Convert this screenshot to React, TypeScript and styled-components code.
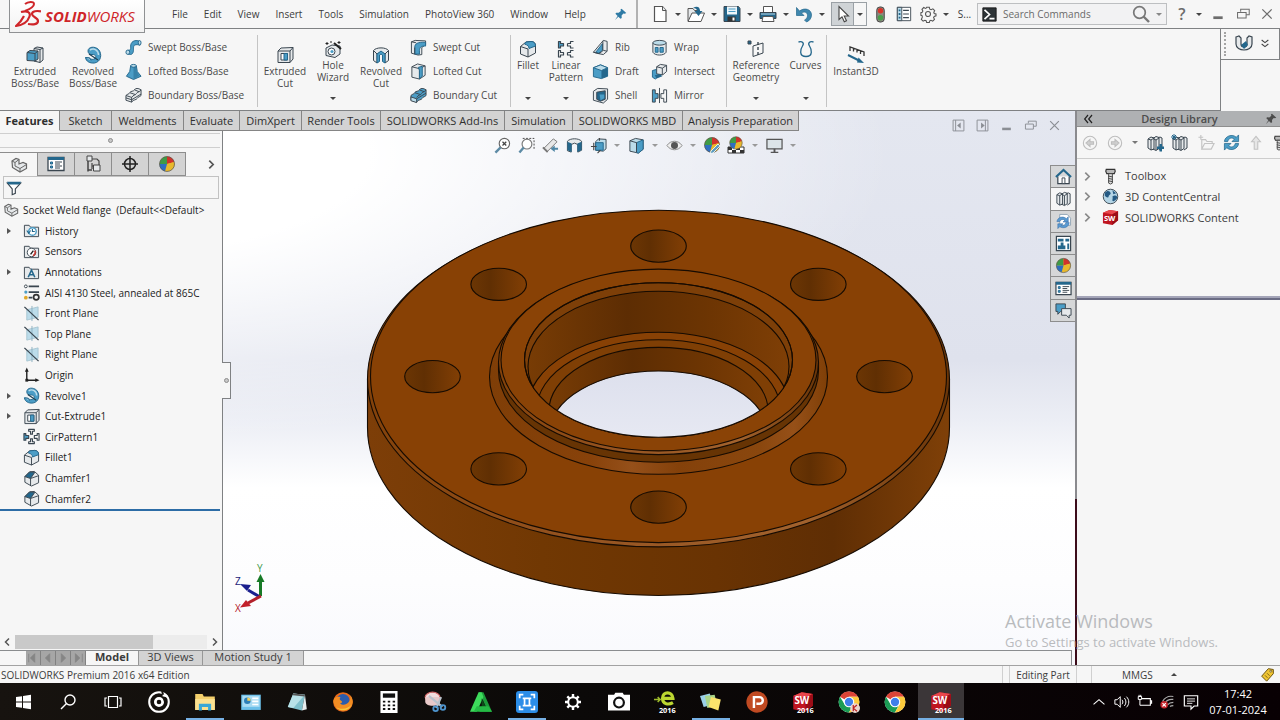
import React, { ReactNode } from 'react';
import styled, { createGlobalStyle, css } from 'styled-components';

const ink = '#3a4650';
const blue = '#4b9dc6';
const deep = '#24678c';
const pale = '#bcdcea';
const steel = '#e6e9eb';
const line = '#7f8183';
const chrome = '#f6f6f6';

const GlobalStyle = createGlobalStyle`
  * { box-sizing: border-box; }
  body {
    margin: 0;
    background: ${chrome};
    color: #3c3c3c;
    font-family: "Open Sans", "Noto Sans", sans-serif;
    font-size: 10px;
    line-height: 12px;
  }
  button, input { font: inherit; color: inherit; }
  button { padding: 0; border: 0; background: none; white-space: nowrap; }
  ul { list-style: none; margin: 0; padding: 0; }
`;

/* ---------- icons, all on an 18 x 18 grid ---------- */

const o = { fill: 'none', stroke: ink, strokeWidth: 1, strokeLinejoin: 'round' as const };

const sphere = (
  <>
    <circle cx="9" cy="9" r="7.5" fill="#e9b92c" />
    <path d="M9 9V1.500A7.500 7.500 0 0 0 1.500 9z" fill="#3f9b46" />
    <path d="M9 9V1.500A7.500 7.500 0 0 1 16.200 7z" fill="#d1332b" />
    <path d="M9 9l7.300-2A7.500 7.500 0 0 1 13 15.300z" fill="#e9b92c" />
    <path d="M9 9l-7.500 0A7.500 7.500 0 0 0 7 16.200z" fill="#2e6fc0" />
    <circle cx="9" cy="9" r="7.5" fill="none" stroke="#555" strokeWidth=".7" />
  </>
);

const books = (
  <>
    <path d="M2 5l3-2 3 1v11l-3 1-3-2zM7 4.500l3-2 3 1v11l-3 2-3-1.500M12 4l2-1 2 1v10l-3 2" fill={steel} stroke={ink} />
    <path d="M5 6v10M10 6v10M2 5l3 1 3-2M7 4.500l3 1.500 3-2" {...o} />
  </>
);

const folder = <path d="M1.500 15.500v-12h5l1.500 2h8.500v10z" fill={steel} stroke={ink} />;

const chromeDisc = (
  <>
    <circle cx="9" cy="9" r="8.500" fill="#fff" />
    <path d="M9 9L1.600 4.800A8.500 8.500 0 0 1 16.400 4.800L9 4.800z" fill="#dc4437" />
    <path d="M1.600 4.800A8.500 8.500 0 0 0 9 17.500L12.500 11 9 13 5.500 11z" fill="#1b9c55" />
    <path d="M16.400 4.800A8.500 8.500 0 0 1 9 17.500L12.700 11 13 8 9 4.800z" fill="#fdcb3c" />
    <circle cx="9" cy="9" r="4.300" fill="#fff" />
    <circle cx="9" cy="9" r="3.400" fill="#3f7fea" />
  </>
);

const swCube = (
  <>
    <path d="M1 4l7-3 9 1.500V12l-6 5-10-2z" fill="#c01520" />
    <path d="M1 4l7-3 9 1.500-6 3z" fill="#e8474c" />
    <path d="M11 5.500L17 2.500V12l-6 5z" fill="#9b0d17" />
  </>
);

const fold = (x: ReactNode) => <>{folder}{x}</>;

const icons: Record<string, ReactNode> = {
  extrude: <><path d="M8 2.500l3-1.500 6 1v12l-3 2.500-6-1.500z" fill={steel} stroke={ink} /><path d="M14 3.500v13M8 2.500l6 1 3-1.500" {...o} /><path d="M1 6.500l3-2 8 .5v8l-3 2-8-.5z" fill={blue} stroke={ink} /><path d="M9 7.500V15M1 6.500l8 1 3-2.500" {...o} /></>,
  revolve: <><path d="M4 5C4 .500 11 0 14.500 3.500 18.500 8 17 16 10.500 17 6 17.500 2 15.500 1.500 11.500l4 .5c1 1.500 4 2 5.500.5 2-2 0-4-2-4C6 9 4 7.500 4 5z" fill={blue} stroke={deep} /><path d="M6 4c4-2.500 8.500.5 8.500 5" stroke={pale} fill="none" strokeWidth="1.500" /><path d="M5 8l9 6" stroke="#1d3e50" strokeWidth="1.200" /><path d="M1.500 11.500l4 .5 1.500 2.500" fill={pale} stroke={deep} /></>,
  sweep: <><path d="M3 16c5 1.500 6-1.500 6-5s0-5 4-5l3 .5V2.500C9.500 0 6 3.500 6 7.500c0 3 .5 4.500-3 4.500z" fill={blue} stroke={deep} /><ellipse cx="3" cy="14" rx="2" ry="2.300" fill={pale} stroke={deep} /><ellipse cx="15.500" cy="4" rx="1.500" ry="2.300" fill={pale} stroke={deep} /></>,
  loft: <><path d="M6 3h6l1 6 4 5-8 3.500L1.500 14 5 9z" fill={blue} stroke={deep} /><path d="M9 4v13l6-3.500-3-5-.5-5z" fill={deep} opacity=".5" /><ellipse cx="9" cy="3" rx="3" ry="1.500" fill={pale} stroke={deep} /></>,
  boundary: <><path d="M1 9c2-2 3-1 4-3s4-1 5-3 4-2 7 0v6c-2 2-3 1-4 3s-4 1-6 4l-6-2z" fill={steel} stroke={ink} /><path d="M1 9l6 2v5M7 11c2-3 4-2 5-4s3-1 5-4M1 11.500l6 2 10-6M5 6l6 2M10 3l5 2" {...o} /></>,
  boundaryCut: <><path d="M1 9c2-2 3-1 4-3s4-1 5-3 4-2 7 0v6c-2 2-3 1-4 3s-4 1-6 4l-6-2z" fill={blue} stroke={ink} /><path d="M1 10.500l6 2v4l-6-2zM7 12.500l10-6" {...o} fill={pale} /><path d="M5 6l6 2M10 3l5 2M7 11c2-3 4-2 5-4s3-1 5-4" {...o} /></>,
  cutExtrude: <><path d="M2 5l3-3 12-.5V13l-3 3.500H2z" fill={steel} stroke={ink} /><path d="M2 5h12v11.500M14 5l3-3.500" {...o} /><path d="M5 7.500h6.500v6.500H5z" fill="#fff" stroke={ink} /><path d="M8 7.500h3.500V14H8z" fill={blue} stroke={deep} /></>,
  hole: <><path d="M2 8l6-3 8 1v8l-5 3.500-9-2z" fill={steel} stroke={ink} /><circle cx="7.500" cy="11.500" r="3.500" fill="#fff" stroke={ink} /><circle cx="8" cy="11.500" r="1.600" fill={blue} /><path d="M10 3l7 6" stroke="#222" strokeWidth="2" /><path d="M3 2v3M1.500 3.500h3M7 1v2M15 1v3M13.500 2.500h3" stroke="#222" /></>,
  cutRevolve: <><path d="M1.500 4.500C4 1 14 1 16.500 4.500v10L13 17V8L9 6 5 8v9l-3.500-2.500z" fill={steel} stroke={ink} /><path d="M5 8l4-3 4 3v9l-2.500-1.500V9L9 8 7.500 9v6.500L5 17z" fill={blue} stroke={deep} /><path d="M1.500 4.500L5 8M16.500 4.500L13 8" {...o} /></>,
  sweepCut: <><path d="M1.500 3l4-1.500 11 .5v4l-4 3v7.500l-4 .5-7-2z" fill={steel} stroke={ink} /><path d="M5 16V9c0-4 3-6 11.500-5.500v4C12 7 10 9 10 12v4z" fill={blue} stroke={deep} /><path d="M1.500 3l5 1M5 9v7" {...o} /></>,
  loftCut: <><path d="M2 4l6-3 8 2v10l-6 4-8-2z" fill={steel} stroke={ink} /><path d="M2 4l8 2 6-3M10 6v11" {...o} /><path d="M9 4.500l4-1V14l-3 2.500V8z" fill={blue} stroke={deep} /></>,
  fillet: <><path d="M1.500 6.500L7 2l5-.5c3 0 4.500 1.500 4.500 4.500v7L9 17l-7.500-3z" fill={steel} stroke={ink} /><path d="M7 2l5-.5c3 0 4.500 1.500 4.500 4.500L10 8.500C10 6 8.500 5 5.500 4z" fill={blue} stroke={deep} /><path d="M1.500 6.500L9 9v8" {...o} /></>,
  chamfer: <><path d="M2 7l5-5 5-.5 4.500 4v8L9 17l-7-4z" fill={steel} stroke={ink} /><path d="M2 7l5-5 5.500.5L8 9z" fill={deep} stroke={ink} /><path d="M8 9v8M8 9l8.500-3" {...o} /></>,
  linear: <g {...o} strokeWidth="1.200"><path d="M1.500 1.500h2v2h3v2.500h-3v2h-2z" fill={blue} /><path d="M10.500 3.500h3v-2h3M16.500 8h-3V6h-3V3.500M1.500 10.500h2v2h3V15h-3v2h-2zM10.500 12.500h3v-2h3M16.500 17h-3v-2h-3v-2.500" /></g>,
  circular: <g {...o} strokeWidth="1.200"><path d="M1 6h2v2h3v3H3v2H1z" fill={blue} /><path d="M6 1.500h6v2h-2v3H8v-3H6zM17 6h-2v2h-3v3h3v2h2zM6 16.500h6v-2h-2v-3H8v3H6z" /></g>,
  rib: <><path d="M1.500 14L12 1.500l4 1V13l-4 3.500-5-1z" fill={steel} stroke={ink} /><path d="M4 14L11 5v7l-4 3z" fill={blue} stroke={deep} /><path d="M1.500 14l6 1.500 4-3V2M12 12l4 1" {...o} /></>,
  draft: <><path d="M1.500 5L9 2l7.500 3v9L10 16.500l-8.500-2z" fill={blue} stroke={deep} /><path d="M10 8l6.500-3v9L10 16.500z" fill={deep} /><path d="M1.500 5L10 8l6.500-3L9 2z" fill={pale} stroke={deep} /></>,
  shell: <><path d="M1.500 4.500L6 1.500l10.500.5v11L12 17l-10.500-3z" fill={steel} stroke={ink} /><path d="M5 5.500l9-1.500v9l-5 2-4-2z" fill={deep} stroke={ink} /><path d="M8 8h5v4l-4 2z" fill={blue} /></>,
  wrap: <><path d="M2 4v10c2 4 12 4 14 0V4" fill={steel} stroke={ink} /><ellipse cx="9" cy="4" rx="7" ry="2.500" fill={pale} stroke={ink} /><path d="M4.500 9h3v5h-3zM9.500 9H13v5H9.500z" fill={blue} stroke={deep} /></>,
  intersect: <><path d="M1.500 8l7-2v8l-4 3-3-2z" fill={blue} stroke={deep} /><path d="M6 4l4-2.500 6.500 1V9l-4 3.500-6.500-1z" fill={steel} stroke={ink} /><path d="M6 4l6 1.500 4.500-3M12 5.500v7" {...o} /><path d="M4 13l6-1 2 2-6 2.500z" fill={deep} /></>,
  mirror: <><path d="M1.500 3h3v4h3v5h-3v4h-3z" fill={blue} stroke={ink} /><path d="M9 1v16" stroke={ink} /><path d="M16.500 3h-3v4h-3v5h3v4h3z" {...o} /></>,
  refGeo: <><path d="M1 1h3v3H1z" fill={deep} stroke={ink} /><path d="M6 6l10-3v10L6 16.500z" {...o} /><path d="M11 2v3M11 7v3M11 12v3" stroke={ink} strokeWidth="1.400" /></>,
  curves: <path d="M1.500 2c4-1 6 1 4 4s-4 10.500 3.500 10.500S14.500 9 12.500 6s0-5 4-4" fill="none" stroke={deep} strokeWidth="1.300" />,
  instant: <><path d="M3 5V1l14 5v4M6.500 2.500v3M10 3.500v3M13.500 5v3" fill="none" stroke="#333" strokeWidth="1.300" /><path d="M1 9l12 6" stroke={deep} strokeWidth="2" /><path d="M11.500 11.500L17 17l-7-.500z" fill={deep} /></>,
  part: <><path d="M2 5l4-2.500 3 1V8l4-1.500 3.500 1.500v4.500L10 16l-7.500-4.500z" fill={steel} stroke="#666" strokeWidth="1.200" /><path d="M2 5l3 1.500 4-3M5 6.500V10l5 2.500 6.500-4M10 12.500V16" {...o} stroke="#666" /></>,
  props: <><path d="M1 2.500h16v13H1z" fill="#fff" stroke={ink} strokeWidth="1.300" /><path d="M1 2h16v3H1z" fill={deep} /><path d="M3.500 7h2v2h-2zM3.500 11h2v2h-2z" fill={blue} stroke={deep} /><path d="M8 7h7M8 9h5M8 11h7M8 13h5" stroke={ink} /></>,
  config: <><path d="M4 1.500v15M4 3h3M4 15h4" stroke="#444" fill="none" strokeWidth="1.500" /><path d="M3 1h5v5H3zM9.500 10h6.500v6H9.500z" fill={steel} stroke="#444" /><path d="M8 4h5l2 2v4M8 8v6M8 11h2" stroke="#444" fill="none" strokeWidth="1.200" /></>,
  target: <g fill="none" stroke="#222" strokeWidth="1.500"><circle cx="9" cy="9" r="5.500" /><path d="M9 1v16M1 9h16" /></g>,
  sphere,
  filter: <><path d="M1.500 3.500L7 10v6.500l3.500-1.500V10l6-6.500z" fill="#fff" stroke={ink} strokeWidth="1.300" /><path d="M1 2h16l-2 3H3z" fill={deep} /></>,
  history: fold(<><circle cx="10" cy="10" r="4" fill="#fff" stroke={blue} strokeWidth="1.500" /><path d="M10 7.500V10h2.500M4 9l2 3 2-3" fill="none" stroke={deep} strokeWidth="1.200" /></>),
  sensors: fold(<><circle cx="9" cy="10" r="4.500" fill="#fff" stroke={ink} /><path d="M12.500 8a4 4 0 0 1-2 5.500" fill="none" stroke="#c23a34" strokeWidth="1.800" /><path d="M8 12l3-4" stroke="#222" strokeWidth="1.500" /></>),
  annot: fold(<path d="M5.500 14L9 6.500 12.500 14M6.800 11.500h4.500" fill="none" stroke={deep} strokeWidth="1.600" />),
  material: <><path d="M6 2.500h11M6 8.500h11M6 14.500h4" stroke={ink} strokeWidth="1.800" /><circle cx="3" cy="2.500" r="1.500" fill="#fff" stroke={ink} /><circle cx="3" cy="8.500" r="1.700" fill={blue} /><circle cx="3" cy="14.500" r="2" fill="#e0a92c" /><circle cx="14" cy="14" r="2.800" fill="none" stroke="#333" strokeWidth="1.800" /></>,
  plane: <><path d="M4 5l12-3v11L4 16z" fill={pale} stroke="#9dbecb" strokeWidth=".8" /><path d="M9.500 1v16" stroke="#8db0c0" /><path d="M1.500 2l15 14" stroke="#3a4650" strokeWidth="1.400" /></>,
  origin: <><path d="M4 3v11h11" fill="none" stroke="#222" strokeWidth="1.500" /><path d="M4 .500L6 5H2zM17.500 14L13 12v4z" fill="#222" /><path d="M2.500 12.500h3v3h-3z" fill="#222" /></>,
  page: <><path d="M3.500 1.500h8l3.500 4v11H3.500z" fill="#fff" stroke="#555" strokeWidth="1.200" /><path d="M11.500 1.500v4H15" fill={steel} stroke="#555" /></>,
  open: <><path d="M1 16V3.500h5l1.500 2h5V8" fill={steel} stroke="#555" /><path d="M1 16.500L5 8h12.500L14 16.500z" fill="#fff" stroke="#555" /><path d="M6 3c4-2.500 7-1 7 3h2.500L11.500 11 7.500 6H10c0-2-1.500-3-4-3z" fill={deep} /></>,
  save: <><path d="M1 1.500h14.500l1.500 2v13H1z" fill={deep} stroke={ink} /><path d="M4 1.500h10v8H4z" fill="#eef6fa" /><path d="M5.500 4h7M5.500 6.500h7" stroke={blue} /><path d="M4.500 11.500h8v5h-8z" fill="#333" /><path d="M9.500 12.500h2v3h-2z" fill="#fff" /></>,
  print: <><path d="M4.500 1.500h9V8h-9z" fill="#fff" stroke="#555" /><path d="M1 7.500h16v6H1z" fill={deep} stroke={ink} /><path d="M2 9h14" stroke={pale} /><path d="M4 11.500h10l1 5H3z" fill="#fff" stroke="#555" /></>,
  undo: <path d="M1.500 2.500v8h7.500L6.500 8c3-2 6-.5 6 2.500 0 2-1 3.500-3 4.500l2 2c3-1 5-4 5-7 0-5.500-6.500-8-12-4z" fill="#3f87ae" stroke={deep} strokeWidth=".7" />,
  cursor: <path d="M5 1.500v13l3-2.700 2.300 5 2.200-1-2.300-4.800h4.300z" fill="#fff" stroke="#444" strokeWidth="1.100" />,
  traffic: <><rect x="5" y="1" width="8" height="16" rx="3.500" fill="#8b8b80" stroke="#444" /><circle cx="9" cy="5" r="2.900" fill="#d8352b" /><circle cx="9" cy="12.500" r="2.900" fill="#49a04b" /></>,
  options: <><path d="M1.500 1.500h15v15h-15z" fill="#fff" stroke={ink} /><path d="M1.500 1.500h5v15h-5z" fill={pale} stroke={ink} /><path d="M3 4h2v2H3zM3 8h2v2H3zM3 12h2v2H3z" fill={deep} /><path d="M8 5h6.500M8 9h6.500M8 13h6.500" stroke={ink} strokeWidth="1.300" /></>,
  gear: <g fill="none" stroke="#555" strokeWidth="1.200"><circle cx="9" cy="9" r="2.800" /><path d="M7.500 1.500h3l.5 2 1.500.7 2-1 2 2-1 2 .5 1.300 2 .5v2l-2 .7-.7 1.300 1 2-2 2-2-1-1.300.6-.5 2h-3l-.6-2-1.400-.6-2 1-2-2 1-2L2.500 11l-1.500-.5v-3l1.500-.4.7-1.400-1-2 2-2 2 1 1-.5z" /></g>,
  terminal: <><path d="M1 1h16v16H1z" fill="#2d3337" stroke="#111" /><path d="M3 3.500L9 9l-6 5.500M9 14h6" fill="none" stroke="#fff" strokeWidth="2" /></>,
  loupe: <><circle cx="7.500" cy="7.500" r="5.800" fill="none" stroke="#777" strokeWidth="1.700" /><path d="M11.500 11.500l5.500 5.500" stroke="#777" strokeWidth="2.400" /></>,
  pin: <path d="M10.500 1l6.500 6-2 .8-2-.3-2.500 3 .2 3.500-1.700 1-3-3L1.500 16.500 5 11 2 8l1-1.500 3.500.2 3-2.700-.5-2z" fill="currentColor" />,
  min: <path d="M3 12h12v3.500H3z" fill="currentColor" />,
  restore: <g fill="none" stroke="currentColor" strokeWidth="1.300"><path d="M6 6V3h11v7h-4" /><path d="M2 7h11v7H2z" /></g>,
  close: <path d="M3 3l12 12M15 3L3 15" stroke="currentColor" strokeWidth="1.600" />,
  paneL: <><path d="M1.500 1.500h15v15h-15zM5 1.500v15" fill="none" stroke="currentColor" strokeWidth="1.300" /><path d="M12 5v8L7 9z" fill="currentColor" /></>,
  paneR: <><path d="M1.500 1.500h15v15h-15zM13 1.500v15" fill="none" stroke="currentColor" strokeWidth="1.300" /><path d="M7 5v8l5-4z" fill="currentColor" /></>,
  clip: <><path d="M1 2l3-1 2 2v6c0 4 6 4 6 0V3l2-2 3 1v7c0 8-16 8-16 0z" fill={steel} stroke={ink} strokeWidth="1.200" /><path d="M6 10l5-4 2 4-4 4z" fill={deep} /></>,
  dblDown: <path d="M4 3l5 4 5-4M4 9l5 4 5-4" fill="none" stroke="#444" strokeWidth="1.600" />,
  dblLeft: <path d="M9 3L4 9l5 6M15 3l-5 6 5 6" fill="none" stroke="#222" strokeWidth="1.800" />,
  zoomFit: <><circle cx="11" cy="7" r="5.500" fill="#fff" stroke="#666" strokeWidth="1.200" /><path d="M9 5l4 4M13 5L9 9" stroke="#444" strokeWidth="1.300" /><path d="M7 11l-5.500 5.500" stroke="#5d8ba5" strokeWidth="2.500" /></>,
  zoomArea: <><path d="M5 1.500h12v12" fill="none" stroke="#444" strokeDasharray="2 1.500" /><circle cx="9.500" cy="7.500" r="5.200" fill="#fff" stroke="#777" strokeWidth="1.200" /><path d="M6 11l-4.500 5.500" stroke="#5d8ba5" strokeWidth="2.500" /></>,
  prevView: <><path d="M2 12L12 2l4 3L6 15z" fill="#e8e8e8" stroke="#777" /><path d="M1 11l5 5" stroke="#777" strokeWidth="2" /><path d="M17 13.500h-3.500V16L9 12.500 13.500 9v2.500H17z" fill="#4f86a5" /></>,
  section: <><path d="M1.500 4.500c3-3.500 12-3.500 15 0V14l-4 2V8L9 6.500 5.500 8v8l-4-1.500z" fill={steel} stroke={ink} /><path d="M1.500 5L6 7v9l-4.500-2zM12 7l4.500-2v9L12 16z" fill={deep} /></>,
  orient: <><path d="M6 5l3-3 8 .5v10L14 15l-8-1z" fill={pale} stroke={ink} /><path d="M6 6h8v8H6z" fill={blue} stroke={deep} /><path d="M1 10h6M4 6v8M10 1v3M8 17l3-3" stroke="#444" strokeWidth="1.200" /></>,
  display: <><path d="M2 4l6-2.500 8 1.500v10l-5 4-9-2z" fill={pale} stroke={ink} /><path d="M9 6l7-3v10l-5 4-2-.5z" fill={blue} stroke={deep} /><path d="M2 4l7 2v10" {...o} /></>,
  eye: <><path d="M1 9c4-6 12-6 16 0-4 6-12 6-16 0z" fill="#eee" stroke="#888" /><circle cx="9" cy="9" r="3.700" fill="#555" /></>,
  appearance: <>{sphere}<path d="M8 15l7-7 2 2-7 7-3 .500z" fill="#5d9cc0" stroke="#fff" strokeWidth=".8" /></>,
  scene: <><path d="M1 11h16v6H1z" fill="#fff" stroke="#333" /><path d="M1 11h4v3H1zM9 11h4v3H9zM5 14h4v3H5zM13 14h4v3h-4z" fill="#333" /><g transform="translate(1.500 -.5) scale(.83)">{sphere}</g></>,
  monitor: <><path d="M1 2.500h16v10H1z" fill="#dce4e8" stroke="#555" strokeWidth="1.300" /><path d="M8 12.500h2v3h3v1.500H5v-1.500h3z" fill="#555" /></>,
  home: <><path d="M3 9v7.500h12V9" fill="#fff" stroke={ink} strokeWidth="1.300" /><path d="M1 9.500L9 2l8 7.500" fill="none" stroke={deep} strokeWidth="2.200" /><path d="M7.500 10.500h3v6h-3z" fill="#fff" stroke={ink} /></>,
  books,
  booksAdd: <>{books}<path d="M11 12.500h2.500V10H16v2.500h2V15h-2v2.500h-2.500V15H11z" fill={deep} /></>,
  booksNew: <>{books}<path d="M3 0v6M0 3h6M1 1l4 4M5 1L1 5" stroke={deep} /></>,
  refresh: <g fill={blue} stroke={deep} strokeWidth=".8"><path d="M1.500 8C2 2 10-.500 14 3.500L16.500 1v7H9.500L12 5.500C9 3 6 4.500 5 8z" /><path d="M16.500 10c-.5 6-8.500 8.500-12.500 4.500L1.500 17v-7h7L6 12.500c3 2.500 6 1 7-2.500z" /></g>,
  recent: <><path d="M5 1.500h8l3.500 4V13H5z" fill="#fff" stroke="#8fa4b5" /><path d="M2 9c1-5 7-6 10-3l2-2v5.500H8.500l2-2C8 6 6 7 5 9zM15 10c0 5-6 7-10 4.500L3 16.500v-5h5.500l-2 1.500c2 1 4.500 0 5-3z" fill="#5a9bd2" stroke="#3a6fa8" strokeWidth=".6" /></>,
  palette: <><path d="M1.500 1.500h15v15h-15z" fill="#fff" stroke={ink} strokeWidth="1.300" /><path d="M3 4h6v3H3zM11 4h4v3h-4zM3 11h8v4H3zM6 8h3v3H6zM13 9h2v6h-2z" fill={deep} /></>,
  chat: <><path d="M1 2h10v8H6l-3 3v-3H1z" fill={blue} stroke={ink} /><path d="M7 7h10v7h-2v3l-3-3H7z" fill={steel} stroke={ink} /></>,
  back: <g fill="none" stroke="#bdbdbd" strokeWidth="1.200"><circle cx="9" cy="9" r="7.500" /><path d="M9 5L4.500 9 9 13v-2.500h4v-3H9z" fill="#d0d0d0" /></g>,
  fwd: <g fill="none" stroke="#bdbdbd" strokeWidth="1.200"><circle cx="9" cy="9" r="7.500" /><path d="M9 5l4.500 4L9 13v-2.500H5v-3h4z" fill="#d0d0d0" /></g>,
  folderNew: <g fill="none" stroke="#c4c4c4" strokeWidth="1.200"><path d="M4 16V6h4l1.500 2H15v2M4 16l3-6h10l-3 6zM3 1v5M.500 3.500h5" /></g>,
  up: <path d="M9 1.500L4 7.500h3V16h4V7.500h3z" fill="#e6e6e6" stroke="#c2c2c2" strokeWidth="1.200" />,
  bolt: <><path d="M4.500 1.500h9l.5 2-1 2.500H5L4 3.500z" fill="#b9b9b9" stroke="#333" strokeWidth="1.200" /><path d="M7 6h4v10l-2 1-2-1zM6.500 8.500l5 1M6.500 11l5 1M6.500 13.500l5 1" fill="#ddd" stroke="#444" /></>,
  globe: <><circle cx="9" cy="9" r="7.700" fill="#b4d5e6" stroke={ink} /><path d="M3 5c3-3 5-2 6 0s-2 2-2 4-3 1-4-1zM11 9c2-2 4-1 5 0s-2 5-4 5 0-3-1-5zM11 2.500l4 3-3 1z" fill="#245a84" /></>,
  sw: <>{swCube}<text x="2" y="13" fontSize="8" fontWeight="700" fill="#fff">SW</text></>,
  tag: <><path d="M2 11L10 2l6 1v5l-8 9z" fill="#f0c532" stroke="#6e5510" strokeWidth="1.200" /><circle cx="13" cy="5" r="1.200" fill="#fff" stroke="#6e5510" /><path d="M6 10l3 3M8.500 7.500l3 3" stroke="#6e5510" /></>,
  windows: <path d="M2 4l6-.8v5.300H2zM9 3l8-1.200v6.700H9zM2 9.500h6v5.300L2 14zM9 9.500h8v6.700L9 15z" fill="#fff" />,
  find: <g fill="none" stroke="#fff" strokeWidth="1.400"><circle cx="11" cy="7" r="5" /><path d="M7.500 10.500L2 16" /></g>,
  taskview: <path d="M4.500 3.500h9v11h-9zM3 5H1v8h2M15 5h2v8h-2" fill="none" stroke="#fff" strokeWidth="1.200" />,
  groove: <><circle cx="9" cy="9" r="8" fill="none" stroke="#fff" strokeWidth="1.700" /><circle cx="9" cy="9" r="3" fill="none" stroke="#fff" strokeWidth="2.200" /><path d="M11.500 0l2.500 9" stroke="#17130f" strokeWidth="1.600" /><path d="M12 3.500l4 1" stroke="#fff" strokeWidth="1.500" /></>,
  explorer: <><path d="M1 2.500h6l1 2h9v11H1z" fill="#f3cf6b" /><path d="M1 6.500h16v9H1z" fill="#fbe190" /><path d="M4 16v-5.500h10V16h-2.500v-3h-5v3z" fill="#39a7d6" /></>,
  panel: <><path d="M1 3h16v12.500H1z" fill="#6cc0ea" /><path d="M2 4h14v9H2z" fill="#a9dbf3" /><circle cx="6" cy="8" r="2.700" fill="#2d7fb8" /><path d="M10 6h5M10 8.500h5M10 11h5" stroke="#fff" strokeWidth="1.300" /><path d="M6 8V5.300A2.700 2.700 0 0 1 8.700 8z" fill="#f4d15b" /></>,
  notepad: <><path d="M6 2l9.500 1-2.500 13L1.500 13z" fill="#7fc0cc" /><path d="M6 2l9.500 1L6 14 1.500 13z" fill="#b8e2e8" /><path d="M15.500 3l1.500 12-4 1z" fill="#e6edee" /><path d="M6 2l9.500 1-.3 1.500-9.700-1z" fill="#555" /></>,
  firefox: <><circle cx="9" cy="9" r="8" fill="#e86a1a" /><circle cx="9" cy="8" r="5.500" fill="#2b5cae" /><path d="M1 8c1 10 15 11 16 1 0-2-.7-4-2-5.500.8 7-5.500 9.500-8.500 6.500C8 10 9 9 7.500 8 6 7.500 6 6 7 5 4 4 2 5 1 8z" fill="#f28d23" /><path d="M3 13c4 4.500 11 3.500 13-2-2 3-8 5-13 2z" fill="#f9c83c" /></>,
  calc: <><path d="M2 0h14v18H2z" fill="#fff" /><path d="M4 2h10v3.500H4z" fill="#111" /><path d="M4 8h2v1.500H4zM8 8h2v1.500H8zM12 8h2v1.500h-2zM4 11h2v1.500H4zM8 11h2v1.500H8zM12 11h2v1.500h-2zM4 14h2v1.500H4zM8 14h2v1.500H8zM12 14h2v1.500h-2z" fill="#111" /></>,
  snip: <><ellipse cx="7" cy="5" rx="6" ry="4" fill="#f2dede" stroke="#d06666" /><path d="M1 5v4c1 4 9 4 12 1V5" fill="#e8c9c9" /><path d="M4 4l11 9M14 5l-4 9" stroke="#b9c3cc" strokeWidth="1.700" /><g fill="none" stroke="#4d94cd" strokeWidth="1.500"><circle cx="9.500" cy="14.500" r="1.900" /><circle cx="15.500" cy="13.500" r="1.900" /></g></>,
  camtasia: <><path d="M7 1h4l7 16H8l-2-4h7L9.500 5z" fill="#1c9c3a" /><path d="M7 1h2.500L11 5 5.500 17H0z" fill="#3ddb5b" /><path d="M9.500 6L13 13H9.500z" fill="#0d4a1a" /><path d="M3 17l2.500-4.500H15L18 17z" fill="#25bb45" /></>,
  capture: <><rect x="0" y="0" width="18" height="18" rx="2.500" fill="#2b8de8" /><path d="M3 6V3h3M12 3h3v3M15 12v3h-3M6 15H3v-3M5.500 6h7M5.500 12h7M7 6v6M11 6v6" fill="none" stroke="#fff" strokeWidth="1.400" /></>,
  settings: <><circle cx="9" cy="9" r="4.800" fill="none" stroke="#fff" strokeWidth="2" /><g stroke="#fff" strokeWidth="2.400"><path d="M9 1v3M9 14v3M1 9h3M14 9h3M3.300 3.300l2 2M12.700 12.700l2 2M14.700 3.300l-2 2M5.300 12.700l-2 2" /></g></>,
  camera: <><path d="M0 3h5l1-1.500h6L13 3h5v13H0z" fill="#fff" /><circle cx="9" cy="9.500" r="4" fill="#fff" stroke="#111" strokeWidth="1.800" /></>,
  edraw: <><path d="M0 7h5M3 5l2 2-2 2" stroke="#9dbb2c" fill="none" strokeWidth="1.300" /><path d="M7 6h8.500c-.5-6-8.500-6-8.500 0 0 5 5 5.500 8.500 3.500" fill="none" stroke="#bcd631" strokeWidth="2.600" /><text x="4" y="18" fontSize="6" fontWeight="700" fill="#fff">2016</text></>,
  sticky: <><path d="M0 4l8-2 3 9-8 2z" fill="#9ad0e8" /><path d="M4 4l8-1 2 9-8 2z" fill="#a9d58a" /><path d="M9 5l8 2-2 9-8-3z" fill="#fbe36c" /></>,
  psim: <><circle cx="9" cy="9" r="8.700" fill="#c04a22" /><path d="M6.500 14V5h4.500a2.700 2.700 0 0 1 0 5.500H8.500" fill="none" stroke="#fff" strokeWidth="2" /></>,
  sw2016: <>{swCube}<text x="2" y="11" fontSize="8" fontWeight="700" fill="#fff">SW</text><text x="4" y="18" fontSize="6" fontWeight="700" fill="#fff">2016</text></>,
  chrome: chromeDisc,
  chromeUser: <>{chromeDisc}<circle cx="14" cy="14" r="4" fill="#e9d5cf" /><path d="M12.500 11.500v5M15.500 11.500l-3 2.500 3 2.500" stroke="#b22" fill="none" /></>,
  chevUp: <path d="M2 12l7-6 7 6" fill="none" stroke="#fff" strokeWidth="1.400" />,
  speaker: <g fill="none" stroke="#fff" strokeWidth="1.100"><path d="M1 6.500h2.500L7 3v12l-3.500-3.500H1zM9 6.500c1.300 1.500 1.300 3.500 0 5M11.500 4.500c2.500 2.500 2.500 6.500 0 9M14 3c3.500 3.500 3.500 8.500 0 12" /></g>,
  battery: <><path d="M6 5.500h10v8H6M16 8h1.500v3H16" fill="none" stroke="#fff" strokeWidth="1.300" /><path d="M1.500 3h4v3.500h-4zM2.500 1v2M4.500 1v2M3.500 6.500v7H6" fill="none" stroke="#fff" strokeWidth="1.200" /></>,
  wifi: <><g fill="none" stroke="#aaa" strokeWidth="1.400"><path d="M3 9c3-5 8-7 13-6M6 11c2-4 6-5 10-4.500M9 13c2-2.500 4-3 7-3M12 15c1-1 2-1 4-1" /></g><circle cx="5" cy="13" r="4.500" fill="#c6262d" /><path d="M3 11l4 4M7 11l-4 4" stroke="#fff" strokeWidth="1.300" /></>,
  action: <><path d="M1.500 2h15v11.500h-4L9 17v-3.500H1.500z" fill="none" stroke="#fff" strokeWidth="1.300" /><path d="M4.500 5.500h9M4.500 8h9M4.500 10.500h6" stroke="#fff" /></>,
};

const IconSvg = styled.svg<{ $s: number }>`
  display: block;
  flex: none;
  width: ${p => p.$s}px;
  height: ${p => p.$s}px;
  overflow: visible;
`;
const Icon = ({ name, size = 16 }: { name: string; size?: number }) => (
  <IconSvg $s={size} viewBox="0 0 18 18" aria-hidden="true">{icons[name]}</IconSvg>
);

const Caret = styled.span<{ $up?: boolean; $tone?: string }>`
  display: block;
  width: 0;
  height: 0;
  border: 3px solid transparent;
  ${p => (p.$up
    ? css`border-bottom-color: ${p.$tone || '#444'}; border-top-width: 0;`
    : css`border-top-color: ${p.$tone || '#444'}; border-bottom-width: 0;`)}
`;

/* ---------- frame ---------- */

const Page = styled.div`
  display: flex;
  flex-direction: column;
  min-height: 100vh;
  position: relative;
`;

const TitleBar = styled.header`
  display: flex;
  align-items: center;
  height: 29px;
  border-bottom: 1px solid ${line};
  background: ${chrome};
`;

const Logo = styled.div`
  position: absolute;
  left: 9px;
  top: -1px;
  width: 136px;
  height: 34px;
  display: flex;
  align-items: center;
  gap: 4px;
  padding-left: 5px;
  background: linear-gradient(#ffffff, #f2f2f2);
  border: 1px solid #8f9193;
  color: #cf2529;
  font-size: 15px;
  line-height: 20px;
  font-style: italic;
  z-index: 2;
  svg { margin-bottom: 4px; }
`;

const Menu = styled.nav`
  display: flex;
  align-items: center;
  gap: 16px;
  width: 638px;
  height: 28px;
  padding: 0 9px 0 172px;
  border-right: 2px solid #b2b2b2;
  flex: none;
`;
const PinButton = styled.button`
  margin-left: auto;
  color: #2f7ba5;
`;

const Cell = styled.button<{ $w: number }>`
  display: flex;
  align-items: center;
  justify-content: center;
  width: ${p => p.$w}px;
  height: 22px;
  flex: none;
`;

const QuickBar = styled.div`
  display: flex;
  align-items: center;
  padding-left: 11px;
`;
const SelectTool = styled.div`
  display: flex;
  height: 24px;
  margin: 0 1px 0 2px;
  border: 1px solid #9aa0a5;
  & > button:first-child { background: #cfd3d6; border-right: 1px solid #9aa0a5; }
`;
const Truncated = styled.span`
  width: 25px;
  text-align: center;
`;
const SearchBox = styled.label`
  display: flex;
  align-items: center;
  gap: 6px;
  width: 190px;
  height: 22px;
  padding: 0 4px;
  border: 1px solid #bdbfc1;
  background: #f2f2f3;
`;
const SearchInput = styled.input`
  flex: 1;
  min-width: 0;
  border: 0;
  padding: 0;
  background: none;
  &::placeholder { color: #6a6a6a; opacity: 1; }
`;
const WindowButtons = styled.div`
  display: flex;
  margin-left: auto;
  color: #6c6c6c;
`;
const HelpMark = styled.span`
  font-size: 16px;
  font-weight: 600;
  line-height: 20px;
`;

/* ---------- ribbon ---------- */

const RibbonRow = styled.div`
  display: flex;
  height: 82px;
`;
const Ribbon = styled.div`
  display: flex;
  flex: 1;
  border-right: 1px solid ${line};
  border-bottom: 1px solid ${line};
`;
const Group = styled.section<{ $pad?: number }>`
  display: flex;
  padding-left: ${p => p.$pad || 0}px;
  &::after {
    content: '';
    width: 1px;
    margin: 6px 0 3px;
    background: #c4c4c4;
  }
`;
const BigTool = styled.button<{ $w: number; $menu?: boolean }>`
  display: flex;
  flex-direction: column;
  align-items: center;
  width: ${p => p.$w}px;
  padding: ${p => (p.$menu ? 11 : 17)}px 0 10px;
  white-space: pre-line;
  text-align: center;
  color: #4a4a4a;
  & > span:first-of-type { margin-top: 1px; }
  & > span + span { margin-top: auto; }
`;
const ToolList = styled.div<{ $w: number; $pad: number }>`
  display: grid;
  grid-auto-rows: 1fr;
  width: ${p => p.$w}px;
  padding: 6px 0 3px ${p => p.$pad}px;
  button {
    display: flex;
    align-items: center;
    gap: 6px;
    color: #4a4a4a;
  }
`;
const MiniBar = styled.div`
  display: flex;
  align-items: center;
  justify-content: space-between;
  width: 59px;
  height: 31px;
  padding: 0 5px 0 3px;
  border-right: 1px solid ${line};
  border-bottom: 1px solid ${line};
  &::before {
    content: '';
    height: 24px;
    margin-right: 6px;
    border-left: 2px dotted #a4a4a4;
  }
`;

/* ---------- workspace ---------- */

const Main = styled.main`
  display: flex;
  flex: 1;
`;
const Workspace = styled.div`
  display: flex;
  flex-direction: column;
  flex: 1;
  min-width: 0;
  background:
    radial-gradient(ellipse 75% 52% at 8% 8%, #ffffff 35%, rgba(255, 255, 255, 0) 100%),
    linear-gradient(#e4e7f0 0%, #dfe2ed 45%, #eceef5 56%, #ffffff 68%, #fdfdfe 85%, #f8f9fd 100%);
`;
const TabsRow = styled.div`
  display: flex;
  height: 20px;
`;
const Tab = styled.button<{ $w: number; $on?: boolean }>`
  width: ${p => p.$w}px;
  border-right: 1px solid #858585;
  border-bottom: 1px solid ${p => (p.$on ? chrome : '#858585')};
  background: ${p => (p.$on ? chrome : '#d3d3d3')};
  font-size: 11px;
  font-weight: ${p => (p.$on ? 700 : 400)};
  color: #2f2f2f;
`;
const DocButtons = styled.div`
  display: flex;
  margin-left: auto;
  padding: 8px 9px 0 0;
  color: #8b8e94;
  button { display: flex; justify-content: center; width: 24px; height: 12px; }
`;
const Body = styled.div`
  display: flex;
  flex: 1;
`;

const FeaturePanel = styled.aside`
  display: flex;
  flex-direction: column;
  width: 223px;
  background: ${chrome};
  border-right: 1px solid ${line};
`;
const Grip = styled.div`
  display: flex;
  align-items: center;
  justify-content: center;
  height: 15px;
  margin: 2px 2px 4px 0;
  border: solid #cfcfcf;
  border-width: 1px 0;
`;
const Dot = styled.span`
  width: 5px;
  height: 5px;
  border: 1px solid #8d8d8d;
  border-radius: 50%;
  background: #c8c8c8;
`;
const ManagerTabs = styled.div`
  display: flex;
  height: 24px;
`;
const ManagerTab = styled.button<{ $on?: boolean }>`
  display: flex;
  align-items: center;
  justify-content: center;
  width: ${p => (p.$on ? 38 : 37)}px;
  flex: none;
  border: solid #8d8d8d;
  border-width: 1px 1px ${p => (p.$on ? 0 : 1)}px 0;
  background: ${p => (p.$on ? chrome : '#d3d3d3')};
`;
const MoreTabs = styled.button`
  margin: 0 6px 0 auto;
`;
const FilterBox = styled.label`
  display: flex;
  align-items: center;
  height: 23px;
  margin: 0 3px 1px;
  padding-left: 2px;
  border: 1px solid #c2c2c2;
`;
const Tree = styled.ul`
  display: grid;
  grid-auto-rows: 1fr;
  height: 311px;
  margin-right: 2px;
  border-bottom: 2px solid #2c6ca6;
  color: #222;
`;
const TreeRow = styled.li<{ $root?: boolean }>`
  display: flex;
  align-items: center;
  overflow: hidden;
  white-space: pre;
  padding-left: ${p => (p.$root ? 3 : 7)}px;
  gap: ${p => (p.$root ? 4 : 5)}px;
`;
const Twist = styled.span<{ $show?: boolean }>`
  width: 11px;
  flex: none;
  &::before {
    content: '';
    display: block;
    width: 0;
    height: 0;
    border: 3px solid transparent;
    border-left: 4px solid ${p => (p.$show ? '#555' : 'transparent')};
    border-right: 0;
  }
`;
const HScroll = styled.div`
  display: flex;
  align-items: center;
  gap: 4px;
  height: 15px;
  margin-top: auto;
  padding: 0 3px 1px;
`;
const ScrollTrack = styled.div`
  flex: 1;
  height: 14px;
  background: #ececec;
  &::before {
    content: '';
    display: block;
    width: 72%;
    height: 14px;
    background: #c9c9c9;
  }
`;

/* ---------- viewport ---------- */

const Viewport = styled.div`
  position: relative;
  flex: 1;
  min-width: 0;
`;
const Drawing = styled.svg`
  display: block;
  width: 100%;
  height: 100%;
`;
const HeadsUp = styled.div`
  position: absolute;
  top: 3px;
  left: 0;
  right: 8px;
  display: flex;
  justify-content: center;
`;
const PanelHandle = styled.button`
  position: absolute;
  left: -1px;
  top: 231px;
  width: 9px;
  height: 37px;
  display: flex;
  align-items: center;
  justify-content: center;
  background: ${chrome};
  border: 1px solid ${line};
  border-left: 0;
`;
const TaskTabs = styled.div`
  position: absolute;
  top: 34px;
  right: 0;
  display: grid;
  grid-auto-rows: 1fr;
  width: 25px;
  height: 157px;
  border: solid #8d8d8d;
  border-width: 1px 0 0 1px;
`;
const TaskTab = styled.button<{ $on?: boolean }>`
  display: flex;
  align-items: center;
  justify-content: center;
  background: ${p => (p.$on ? chrome : '#d6d7d8')};
  border-bottom: 1px solid #8d8d8d;
`;

const Ring = ({ rx, cy, ...rest }: { rx: number; cy: number } & React.SVGProps<SVGEllipseElement>) => (
  <ellipse cx={658.5} cy={cy} rx={rx} ry={rx * 0.577} {...rest} />
);

const boltHoles = Array.from({ length: 8 }, (_, i) => {
  const a = (i * Math.PI) / 4;
  return { x: 658.5 + 226 * Math.cos(a), y: 376.6 + 130.5 * Math.sin(a) };
});

const Flange = () => (
  <g stroke="#160b02" strokeWidth="1.100" fill="none">
    <defs>
      <linearGradient id="rim">
        <stop offset="0" stopColor="#7d3e08" />
        <stop offset=".3" stopColor="#713803" />
        <stop offset=".6" stopColor="#693303" />
        <stop offset=".8" stopColor="#5f2e04" />
        <stop offset="1" stopColor="#7f4008" />
      </linearGradient>
      <linearGradient id="bevel">
        <stop offset="0" stopColor="#84420a" />
        <stop offset=".35" stopColor="#955320" />
        <stop offset=".75" stopColor="#a2622d" />
        <stop offset="1" stopColor="#6a3508" />
      </linearGradient>
      <linearGradient id="hole">
        <stop offset="0" stopColor="#6c3604" />
        <stop offset=".35" stopColor="#602f03" />
        <stop offset="1" stopColor="#823f05" />
      </linearGradient>
      <linearGradient id="bore">
        <stop offset="0" stopColor="#783c05" />
        <stop offset=".38" stopColor="#5d2d03" />
        <stop offset=".7" stopColor="#6d3503" />
        <stop offset="1" stopColor="#7f3f06" />
      </linearGradient>
      <linearGradient id="cove">
        <stop offset="0" stopColor="#7f3e07" />
        <stop offset=".3" stopColor="#88420a" />
        <stop offset=".42" stopColor="#95501a" />
        <stop offset=".56" stopColor="#84410a" />
        <stop offset=".8" stopColor="#8a470e" />
        <stop offset=".9" stopColor="#965018" />
        <stop offset="1" stopColor="#7f3f07" />
      </linearGradient>
      <linearGradient id="sky" x1="0" y1="0" x2="0" y2="1">
        <stop offset="0" stopColor="#dde0ed" />
        <stop offset="1" stopColor="#eff0f7" />
      </linearGradient>
      <clipPath id="mouth"><Ring rx={134} cy={360} /></clipPath>
      <clipPath id="wall"><Ring rx={130.5} cy={366.6} /></clipPath>
    </defs>
    <path d="M367.500 379v48.500a291 168 0 0 0 582 0V379z" fill="url(#rim)" />
    <Ring rx={291} cy={379} fill="url(#bevel)" />
    <Ring rx={288} cy={376.4} fill="#884105" />
    {boltHoles.map(h => (
      <ellipse key={`${h.x}-${h.y}`} cx={h.x} cy={h.y} rx="27.800" ry="16.100" fill="url(#hole)" />
    ))}
    <Ring rx={169} cy={376.8} fill="url(#cove)" />
    <path d="M498.500 362.300v7.700a160 92.300 0 0 0 320 0v-7.700z" fill="#673404" />
    <Ring rx={160} cy={362.3} fill="url(#bevel)" />
    <Ring rx={157.5} cy={360} fill="#8a4306" />
    <Ring rx={134} cy={360} fill="#7d3f08" />
    <g clipPath="url(#mouth)">
      <Ring rx={130.5} cy={366.6} fill="url(#bore)" />
      <g clipPath="url(#wall)">
        <Ring rx={130.5} cy={407.6} fill="#884105" />
        <Ring rx={122} cy={410.1} fill="#7f3f05" />
        <Ring rx={109.5} cy={410.6} fill="url(#bore)" />
      </g>
      <Ring rx={109.5} cy={434.2} fill="url(#sky)" />
    </g>
    <Ring rx={134} cy={360} />
  </g>
);

const Triad = () => (
  <g strokeWidth="3" fontSize="10">
    <path d="M260.500 596V579" stroke="#177a26" />
    <path d="M256.500 582l4-8 4 8z" fill="#177a26" />
    <path d="M260 597l-12-7" stroke="#1b1f8e" />
    <path d="M251 585l-11-1 7 7z" fill="#1b1f8e" />
    <path d="M261 596l-13 7" stroke="#b3202a" />
    <path d="M246 600l-6 7.500 11-1.500z" fill="#c2202a" />
    <text x="257" y="572" fill="#3f9a4d">Y</text>
    <text x="235" y="585" fill="#23237a">Z</text>
    <text x="235" y="612" fill="#b3202a">X</text>
  </g>
);

/* ---------- model tabs, status bar ---------- */

const ModelTabs = styled.div`
  display: flex;
  height: 15px;
  padding-left: 26px;
  margin-right: 3px;
  background: ${chrome};
  border: solid #8a8c8e;
  border-width: 1px 1px 0 0;
`;
const NavKey = styled.button`
  width: 15px;
  background: #a6a6a6;
  border-right: 1px solid #818181;
  svg { margin: 0 auto; }
`;
const ModelTab = styled.button<{ $w: number; $on?: boolean }>`
  display: flex;
  justify-content: center;
  width: ${p => p.$w}px;
  line-height: 12px;
  font-size: 11px;
  font-weight: ${p => (p.$on ? 700 : 400)};
  background: ${p => (p.$on ? chrome : '#d3d3d3')};
  border-right: 1px solid #979797;
`;
const StatusBar = styled.footer`
  display: flex;
  align-items: center;
  height: 18px;
  padding: 0 5px 0 1px;
  border-top: 1px solid #a2a2a2;
`;
const StatusCell = styled.span<{ $w: number }>`
  display: flex;
  align-items: center;
  justify-content: center;
  width: ${p => p.$w}px;
  height: 17px;
  border-left: 1px solid #d0d0d0;
`;
const StatusRight = styled.div`
  display: flex;
  align-items: center;
  margin-left: auto;
`;
const UnitButton = styled.button`
  display: flex;
  align-items: center;
  gap: 18px;
  width: 169px;
  height: 17px;
  padding-left: 30px;
  border-left: 1px solid #d0d0d0;
`;

/* ---------- design library ---------- */

const Library = styled.aside`
  display: flex;
  flex-direction: column;
  width: 205px;
  border: solid #7c7c80;
  border-width: 0 0 0 2px;
  border-image: linear-gradient(#8a8a8e 70%, #3c0c1a 70%) 1;
`;
const LibraryHead = styled.h2`
  display: flex;
  align-items: center;
  justify-content: space-between;
  height: 16px;
  margin: 0;
  padding: 0 3px 0 5px;
  background: #afb1b3;
  border-bottom: 1px solid #8e8e8e;
  font-size: 11px;
  font-weight: 600;
  color: #4c4c4c;
`;
const LibraryTools = styled.div`
  display: flex;
  align-items: center;
  height: 32px;
  overflow: hidden;
  border-bottom: 1px solid #cdcdcd;
`;
const LibraryList = styled.ul`
  display: grid;
  grid-auto-rows: 1fr;
  height: 137px;
  padding: 7px 0 68px;
  font-size: 11px;
`;
const LibraryItem = styled.li`
  display: flex;
  align-items: center;
  padding-left: 6px;
  gap: 6px;
  svg:first-child { margin-right: 4px; }
`;
const Splitter = styled.div`
  height: 4px;
  border-top: 2px solid #a4a5b8;
  background: #6b6c84;
`;

const Chevron = ({ left, tone = '#555', size = 8 }: { left?: boolean; tone?: string; size?: number }) => (
  <IconSvg $s={size} viewBox="0 0 8 8" aria-hidden="true">
    <path d={left ? 'M6 .5L2.500 4 6 7.500' : 'M2 .5L5.500 4 2 7.500'} fill="none" stroke={tone} strokeWidth="1.500" />
  </IconSvg>
);

/* ---------- desktop ---------- */

const Watermark = styled.div`
  position: absolute;
  right: 53px;
  bottom: 69px;
  width: 222px;
  white-space: nowrap;
  color: #b9bbbe;
  font-size: 13px;
  line-height: 18px;
  pointer-events: none;
  strong { display: block; font-size: 18px; line-height: 24px; font-weight: 400; }
`;
const Taskbar = styled.footer`
  display: flex;
  height: 37px;
  background: linear-gradient(90deg, #17130f, #0b0908 45%, #080003);
  color: #fff;
`;
const TaskButton = styled.button<{ $w: number; $open?: boolean; $front?: boolean }>`
  display: flex;
  align-items: center;
  justify-content: center;
  width: ${p => p.$w}px;
  flex: none;
  position: relative;
  background: ${p => (p.$front ? '#3b3638' : 'none')};
  ${p => p.$open && css`
    &::after {
      content: '';
      position: absolute;
      bottom: 0;
      left: ${p.$front ? 0 : 4}px;
      right: ${p.$front ? 0 : 4}px;
      height: 2px;
      background: #76b0e4;
    }
  `}
`;
const Tray = styled.div`
  display: flex;
  align-items: center;
  margin-left: auto;
  button { width: 23px; display: flex; justify-content: center; }
`;
const Clock = styled.time`
  width: 72px;
  margin-right: 6px;
  text-align: center;
  font-size: 11px;
  line-height: 16px;
`;

/* ---------- data ---------- */

const menus = ['File', 'Edit', 'View', 'Insert', 'Tools', 'Simulation', 'PhotoView 360', 'Window', 'Help'];

const tabs: [string, number][] = [
  ['Features', 60], ['Sketch', 52], ['Weldments', 72], ['Evaluate', 56], ['DimXpert', 62],
  ['Render Tools', 79], ['SOLIDWORKS Add-Ins', 124], ['Simulation', 68], ['SOLIDWORKS MBD', 110], ['Analysis Preparation', 116],
];

const features: [string, string, boolean?][] = [
  ['history', 'History', true], ['sensors', 'Sensors'], ['annot', 'Annotations', true],
  ['material', 'AISI 4130 Steel, annealed at 865C'], ['plane', 'Front Plane'], ['plane', 'Top Plane'],
  ['plane', 'Right Plane'], ['origin', 'Origin'], ['revolve', 'Revolve1', true], ['cutExtrude', 'Cut-Extrude1', true],
  ['circular', 'CirPattern1'], ['fillet', 'Fillet1'], ['chamfer', 'Chamfer1'], ['chamfer', 'Chamfer2'],
];

const apps: [string, string, number, boolean?, boolean?][] = [
  ['windows', 'Start', 45], ['find', 'Search', 45], ['taskview', 'Task view', 46], ['groove', 'Music', 46],
  ['explorer', 'Explorer', 46, true], ['panel', 'Control panel', 46], ['notepad', 'Notepad', 46], ['firefox', 'Firefox', 46],
  ['calc', 'Calculator', 46], ['snip', 'Snipping tool', 46], ['camtasia', 'Recorder', 46], ['capture', 'Screen capture', 46, true],
  ['settings', 'Settings', 46], ['camera', 'Camera', 46], ['edraw', 'eDrawings', 46], ['sticky', 'Sticky notes', 46, true],
  ['psim', 'Presentation', 46], ['sw2016', 'SOLIDWORKS', 46], ['chromeUser', 'Chrome profile', 46], ['chrome', 'Chrome', 46],
  ['sw2016', 'SOLIDWORKS window', 46, true, true],
];

const Big = ({ icon, text, w, menu }: { icon: string; text: string; w: number; menu?: boolean }) => (
  <BigTool $w={w} $menu={menu}>
    <Icon name={icon} size={18} />
    <span>{text}</span>
    {menu && <Caret />}
  </BigTool>
);

const List = ({ w, pad = 0, items }: { w: number; pad?: number; items: [string, string][] }) => (
  <ToolList $w={w} $pad={pad}>
    {items.map(([icon, text]) => (
      <button key={text}><Icon name={icon} size={17} />{text}</button>
    ))}
  </ToolList>
);

const IconCell = ({ name, label, w = 24, size = 16 }: { name: string; label: string; w?: number; size?: number }) => (
  <Cell $w={w} aria-label={label}><Icon name={name} size={size} /></Cell>
);
const Drop = ({ w = 14, label, tone }: { w?: number; label: string; tone?: string }) => (
  <Cell $w={w} aria-label={label}><Caret $tone={tone} /></Cell>
);

export default function App() {
  return (
    <Page>
      <GlobalStyle />
      <TitleBar>
        <Logo>
          <svg width="26" height="28" viewBox="0 0 26 28" aria-hidden="true">
            <g fill="none" stroke="#cf2529" strokeLinejoin="round">
              <path d="M10 4c3-2.500 9-3 9 0 0 2.500-4 5-9 7" strokeWidth="2" />
              <path d="M6 12c6-1.500 10 0 8.500 4.500C13 21 8 25 1 26c3-2.500 6-6 8-10" strokeWidth="2.200" />
              <path d="M26 11.500c-4-1-9-.5-9 2.500 0 3 6 3.500 6 7 0 3.500-5 4-10 3" strokeWidth="2.200" />
            </g>
          </svg>
          <span><b>SOLID</b>WORKS</span>
        </Logo>
        <Menu>
          {menus.map(m => <button key={m}>{m}</button>)}
          <PinButton aria-label="Pin menu"><Icon name="pin" size={13} /></PinButton>
        </Menu>
        <QuickBar>
          {['page', 'open', 'save', 'print', 'undo'].map(n => (
            <React.Fragment key={n}>
              <IconCell name={n} label={n} w={22} size={18} />
              <Drop label={`${n} options`} />
            </React.Fragment>
          ))}
          <SelectTool>
            <IconCell name="cursor" label="Select" w={22} size={18} />
            <Drop w={12} label="Select options" />
          </SelectTool>
          <IconCell name="traffic" label="Rebuild" size={17} />
          <IconCell name="options" label="File properties" size={16} />
          <IconCell name="gear" label="Options" size={16} />
          <Drop w={12} label="Options menu" />
          <Truncated>S...</Truncated>
          <SearchBox>
            <Icon name="terminal" size={15} />
            <SearchInput type="search" placeholder="Search Commands" aria-label="Search Commands" />
            <Icon name="loupe" size={18} />
            <Caret $tone="#888" />
          </SearchBox>
        </QuickBar>
        <WindowButtons>
          <Cell $w={26} aria-label="Help"><HelpMark>?</HelpMark></Cell>
          <Drop w={8} label="Help options" />
          <IconCell name="min" label="Minimise" w={30} size={14} />
          <IconCell name="restore" label="Restore" w={20} size={14} />
          <IconCell name="close" label="Close" w={27} size={14} />
        </WindowButtons>
      </TitleBar>

      <RibbonRow>
        <Ribbon>
          <Group $pad={6}>
            <Big icon="extrude" text={'Extruded\nBoss/Base'} w={58} />
            <Big icon="revolve" text={'Revolved\nBoss/Base'} w={58} />
            <List w={135} pad={3} items={[['sweep', 'Swept Boss/Base'], ['loft', 'Lofted Boss/Base'], ['boundary', 'Boundary Boss/Base']]} />
          </Group>
          <Group $pad={3}>
            <Big icon="cutExtrude" text={'Extruded\nCut'} w={48} />
            <Big icon="hole" text={'Hole\nWizard'} w={48} menu />
            <Big icon="cutRevolve" text={'Revolved\nCut'} w={48} />
            <List w={105} pad={5} items={[['sweepCut', 'Swept Cut'], ['loftCut', 'Lofted Cut'], ['boundaryCut', 'Boundary Cut']]} />
          </Group>
          <Group>
            <Big icon="fillet" text="Fillet" w={34} menu />
            <Big icon="linear" text={'Linear\nPattern'} w={42} menu />
            <List w={64} pad={5} items={[['rib', 'Rib'], ['draft', 'Draft'], ['shell', 'Shell']]} />
            <List w={75} items={[['wrap', 'Wrap'], ['intersect', 'Intersect'], ['mirror', 'Mirror']]} />
          </Group>
          <Group>
            <Big icon="refGeo" text={'Reference\nGeometry'} w={58} menu />
            <Big icon="curves" text="Curves" w={41} menu />
          </Group>
          <Big icon="instant" text="Instant3D" w={58} />
        </Ribbon>
        <MiniBar>
          <IconCell name="clip" label="Attach" w={20} size={18} />
          <IconCell name="dblDown" label="More tools" w={18} size={12} />
        </MiniBar>
      </RibbonRow>

      <Main>
        <Workspace>
          <TabsRow>
            {tabs.map(([t, w], i) => <Tab key={t} $w={w} $on={i === 0}>{t}</Tab>)}
            <DocButtons>
              {['paneL', 'paneR', 'min', 'restore', 'close'].map(n => (
                <button key={n} aria-label={n}><Icon name={n} size={13} /></button>
              ))}
            </DocButtons>
          </TabsRow>
          <Body>
            <FeaturePanel>
              <Grip><Dot /></Grip>
              <ManagerTabs>
                {['part', 'props', 'config', 'target', 'sphere'].map((n, i) => (
                  <ManagerTab key={n} $on={i === 0} aria-label={n}><Icon name={n} size={18} /></ManagerTab>
                ))}
                <MoreTabs aria-label="More tabs"><Chevron size={9} /></MoreTabs>
              </ManagerTabs>
              <FilterBox>
                <Icon name="filter" size={16} />
                <SearchInput type="text" aria-label="Filter features" />
              </FilterBox>
              <Tree>
                <TreeRow $root>
                  <Icon name="part" size={16} />
                  <span>{'Socket Weld flange  (Default<<Default>'}</span>
                </TreeRow>
                {features.map(([icon, text, open]) => (
                  <TreeRow key={text}>
                    <Twist $show={open} />
                    <Icon name={icon} size={17} />
                    <span>{text}</span>
                  </TreeRow>
                ))}
              </Tree>
              <HScroll>
                <Chevron left size={8} />
                <ScrollTrack />
                <Chevron size={8} />
              </HScroll>
            </FeaturePanel>
            <Viewport>
              <Drawing viewBox="223 131 852 519" role="img" aria-label="Socket weld flange model">
                <Flange />
                <Triad />
              </Drawing>
              <HeadsUp>
                <IconCell name="zoomFit" label="Zoom to fit" size={17} />
                <IconCell name="zoomArea" label="Zoom to area" size={17} />
                <IconCell name="prevView" label="Previous view" size={17} />
                <IconCell name="section" label="Section view" size={17} />
                <IconCell name="orient" label="View orientation" size={17} />
                <Drop label="Orientation menu" tone="#999" />
                <IconCell name="display" label="Display style" size={17} />
                <Drop label="Display menu" tone="#999" />
                <IconCell name="eye" label="Hide or show" size={17} />
                <Drop label="Hide menu" tone="#999" />
                <IconCell name="appearance" label="Edit appearance" size={18} />
                <IconCell name="scene" label="Apply scene" size={18} />
                <Drop label="Scene menu" tone="#999" />
                <IconCell name="monitor" label="View settings" size={17} />
                <Drop label="View settings menu" tone="#999" />
              </HeadsUp>
              <PanelHandle aria-label="Collapse panel"><Dot /></PanelHandle>
              <TaskTabs>
                {['home', 'books', 'recent', 'palette', 'sphere', 'props', 'chat'].map((n, i) => (
                  <TaskTab key={n} $on={i === 1} aria-label={n}><Icon name={n} size={17} /></TaskTab>
                ))}
              </TaskTabs>
            </Viewport>
          </Body>
          <ModelTabs>
            {['M9 2L4 7l5 5zM2 2v10', 'M9 2L4 7l5 5z', 'M5 2l5 5-5 5z', 'M4 2l5 5-5 5zM12 2v10'].map((d, i) => (
              <NavKey key={d} aria-label={`Tab scroll ${i + 1}`}>
                <IconSvg $s={12} viewBox="0 0 14 14"><path d={d} fill="#858585" stroke="#858585" /></IconSvg>
              </NavKey>
            ))}
            <ModelTab $w={53} $on>Model</ModelTab>
            <ModelTab $w={64}>3D Views</ModelTab>
            <ModelTab $w={101}>Motion Study 1</ModelTab>
          </ModelTabs>
        </Workspace>

        <Library>
          <LibraryHead>
            <Icon name="dblLeft" size={12} />
            Design Library
            <Icon name="pin" size={12} />
          </LibraryHead>
          <LibraryTools>
            <IconCell name="back" label="Back" w={26} />
            <IconCell name="fwd" label="Forward" w={24} />
            <Drop w={16} label="History" tone="#777" />
            <IconCell name="booksAdd" label="Add to library" w={24} size={18} />
            <IconCell name="booksNew" label="Add file location" w={26} size={18} />
            <IconCell name="folderNew" label="New folder" w={26} size={17} />
            <IconCell name="refresh" label="Refresh" w={25} size={17} />
            <IconCell name="up" label="Up" w={24} size={16} />
            <IconCell name="bolt" label="Configure toolbox" w={22} size={16} />
          </LibraryTools>
          <LibraryList>
            <LibraryItem><Chevron tone="#8a8a8a" size={9} /><Icon name="bolt" size={17} /><span>Toolbox</span></LibraryItem>
            <LibraryItem><Chevron tone="#8a8a8a" size={9} /><Icon name="globe" size={17} /><span>3D ContentCentral</span></LibraryItem>
            <LibraryItem><Chevron tone="#8a8a8a" size={9} /><Icon name="sw" size={17} /><span>SOLIDWORKS Content</span></LibraryItem>
          </LibraryList>
          <Splitter />
        </Library>
      </Main>

      <StatusBar>
        SOLIDWORKS Premium 2016 x64 Edition
        <StatusRight>
          <StatusCell $w={7} />
          <StatusCell $w={67}>Editing Part</StatusCell>
          <StatusCell $w={15} />
          <UnitButton>MMGS <Caret $up /></UnitButton>
          <Icon name="tag" size={15} />
        </StatusRight>
      </StatusBar>

      <Watermark>
        <strong>Activate Windows</strong>
        Go to Settings to activate Windows.
      </Watermark>

      <Taskbar>
        {apps.map(([icon, label, w, open, front]) => (
          <TaskButton key={label} $w={w} $open={open} $front={front} aria-label={label}>
            <Icon name={icon} size={['windows', 'find', 'taskview', 'settings'].includes(icon) ? 18 : 22} />
          </TaskButton>
        ))}
        <Tray>
          <button aria-label="Hidden icons"><Icon name="chevUp" size={14} /></button>
          <button aria-label="Volume"><Icon name="speaker" size={16} /></button>
          <button aria-label="Battery"><Icon name="battery" size={15} /></button>
          <button aria-label="Network"><Icon name="wifi" size={15} /></button>
          <button aria-label="Notifications"><Icon name="action" size={16} /></button>
          <Clock>17:42<br />07-01-2024</Clock>
        </Tray>
      </Taskbar>
    </Page>
  );
}
